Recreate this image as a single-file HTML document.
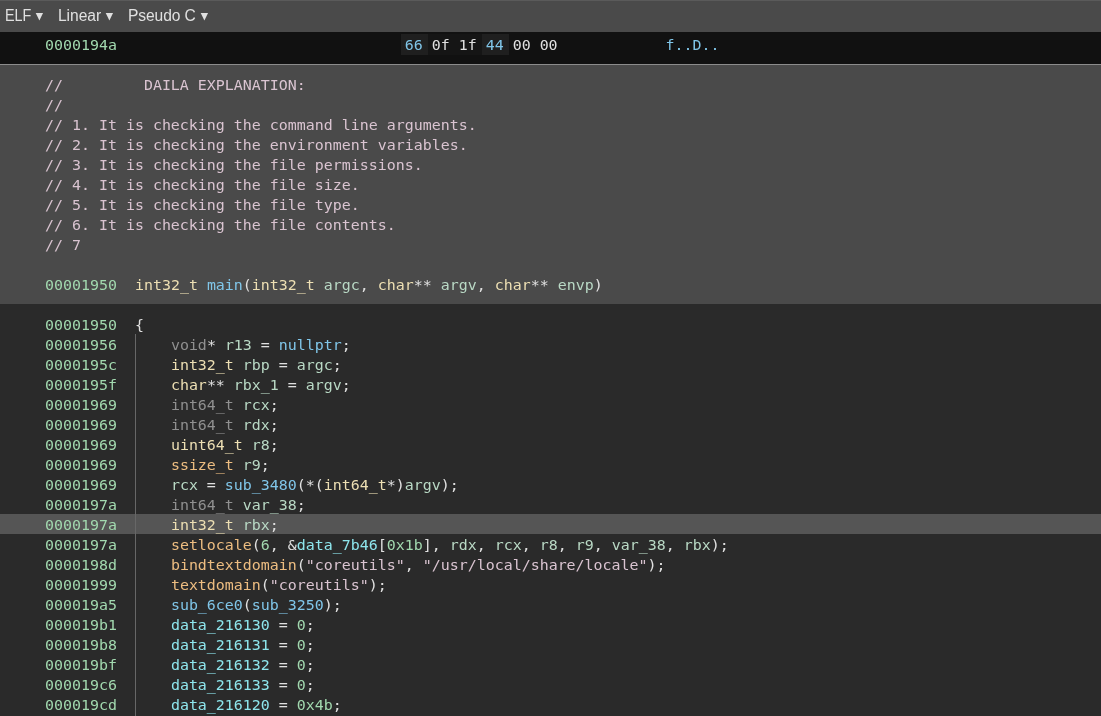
<!DOCTYPE html>
<html><head><meta charset="utf-8"><title>Linear view</title>
<style>
html,body{margin:0;padding:0;background:#2a2a2a;}
body{width:1101px;height:716px;position:relative;overflow:hidden;font-family:"DejaVu Sans Mono","Liberation Mono",monospace;font-size:14.95px;letter-spacing:0;color:#e0e0e0;}
.bg{position:absolute;left:0;width:1101px;}
.ln{position:absolute;left:0;height:20px;line-height:20px;white-space:pre;}
.ad{color:#a2d9af} .cm{color:#dac4d1} .ty{color:#eddfb3} .fn{color:#80c6e9} .im{color:#edbd81} .nu{color:#a2d9af} .st{color:#dac4d1} .gr{color:#909090} .da{color:#8ee6ed} .va{color:#b9d9c5}
.hb{color:#80c6e9;}
#txt{position:absolute;left:0;top:0;width:1101px;height:716px;will-change:transform;}
.ar{position:absolute;top:13px;width:0;height:0;border-left:3.7px solid transparent;border-right:3.7px solid transparent;border-top:7.6px solid #e0e0e0;}
.bx{position:absolute;top:34px;height:21px;width:27px}
.tb{position:absolute;top:0;height:31px;line-height:31px;font-family:"Liberation Sans",sans-serif;font-size:15px;color:#e0e0e0;white-space:pre;}
</style></head><body>
<div class="bg" style="top:0;height:32px;background:#4a4a4a;border-top:1px solid #5a5a5a;box-sizing:border-box"></div>
<div class="bg" style="top:32px;height:32px;background:#111"></div>
<div class="bg" style="top:64px;height:1px;background:#8c8c8c"></div>
<div class="bg" style="top:65px;height:239px;background:#4a4a4a"></div>
<div class="bg" style="top:514px;height:20px;background:#555"></div>
<div style="position:absolute;left:135px;top:334px;width:1px;height:382px;background:#676767"></div>
<div class="bx" style="left:401px;background:#1f1f1f"></div><div class="bx" style="left:428px;width:54px;background:#151515"></div><div class="bx" style="left:482px;background:#1f1f1f"></div>
<div id="txt">
<div class="tb" style="left:5px;top:0px;font-size:15.6px;letter-spacing:0;transform-origin:0 50%;transform: scaleX(0.92)">ELF</div><div class="tb" style="left:58px;top:0px;font-size:15.6px;letter-spacing:-0.05px;transform-origin:0 50%;transform: scaleX(1)">Linear</div><div class="tb" style="left:128px;top:0px;font-size:15.6px;letter-spacing:-0.1px;transform-origin:0 50%;transform: scaleX(1)">Pseudo C</div><svg style="position:absolute;left:0;top:0" width="260" height="32" viewBox="0 0 260 32"><polygon fill="#e0e0e0" points="35.7,12.9 43.05,12.9 39.4,20.5"/><polygon fill="#e0e0e0" points="105.7,12.9 113.05,12.9 109.4,20.5"/><polygon fill="#e0e0e0" points="200.7,12.9 208.05,12.9 204.4,20.5"/></svg>
<div class="ln" style="top:35px">     <span class="ad">0000194a</span>                                <span class="hb">66</span> 0f 1f <span class="hb">44</span> 00 00            <span class="fn">f..D..</span></div>
<div class="ln" style="top:75px">     <span class="cm">//         DAILA EXPLANATION:</span></div>
<div class="ln" style="top:95px">     <span class="cm">//</span></div>
<div class="ln" style="top:115px">     <span class="cm">// 1. It is checking the command line arguments.</span></div>
<div class="ln" style="top:135px">     <span class="cm">// 2. It is checking the environment variables.</span></div>
<div class="ln" style="top:155px">     <span class="cm">// 3. It is checking the file permissions.</span></div>
<div class="ln" style="top:175px">     <span class="cm">// 4. It is checking the file size.</span></div>
<div class="ln" style="top:195px">     <span class="cm">// 5. It is checking the file type.</span></div>
<div class="ln" style="top:215px">     <span class="cm">// 6. It is checking the file contents.</span></div>
<div class="ln" style="top:235px">     <span class="cm">// 7</span></div>
<div class="ln" style="top:275px">     <span class="ad">00001950</span>  <span class="ty">int32_t</span> <span class="fn">main</span>(<span class="ty">int32_t</span> <span class="va">argc</span>, <span class="ty">char</span>** <span class="va">argv</span>, <span class="ty">char</span>** <span class="va">envp</span>)</div>
<div class="ln" style="top:315px">     <span class="ad">00001950</span>  {</div>
<div class="ln" style="top:335px">     <span class="ad">00001956</span>      <span class="gr">void</span>* <span class="va">r13</span> = <span class="fn">nullptr</span>;</div>
<div class="ln" style="top:355px">     <span class="ad">0000195c</span>      <span class="ty">int32_t</span> <span class="va">rbp</span> = <span class="va">argc</span>;</div>
<div class="ln" style="top:375px">     <span class="ad">0000195f</span>      <span class="ty">char</span>** <span class="va">rbx_1</span> = <span class="va">argv</span>;</div>
<div class="ln" style="top:395px">     <span class="ad">00001969</span>      <span class="gr">int64_t</span> <span class="va">rcx</span>;</div>
<div class="ln" style="top:415px">     <span class="ad">00001969</span>      <span class="gr">int64_t</span> <span class="va">rdx</span>;</div>
<div class="ln" style="top:435px">     <span class="ad">00001969</span>      <span class="ty">uint64_t</span> <span class="va">r8</span>;</div>
<div class="ln" style="top:455px">     <span class="ad">00001969</span>      <span class="im">ssize_t</span> <span class="va">r9</span>;</div>
<div class="ln" style="top:475px">     <span class="ad">00001969</span>      <span class="va">rcx</span> = <span class="fn">sub_3480</span>(*(<span class="ty">int64_t</span>*)<span class="va">argv</span>);</div>
<div class="ln" style="top:495px">     <span class="ad">0000197a</span>      <span class="gr">int64_t</span> <span class="va">var_38</span>;</div>
<div class="ln" style="top:515px">     <span class="ad">0000197a</span>      <span class="ty">int32_t</span> <span class="va">rbx</span>;</div>
<div class="ln" style="top:535px">     <span class="ad">0000197a</span>      <span class="im">setlocale</span>(<span class="nu">6</span>, &<span class="da">data_7b46</span>[<span class="nu">0x1b</span>], <span class="va">rdx</span>, <span class="va">rcx</span>, <span class="va">r8</span>, <span class="va">r9</span>, <span class="va">var_38</span>, <span class="va">rbx</span>);</div>
<div class="ln" style="top:555px">     <span class="ad">0000198d</span>      <span class="im">bindtextdomain</span>(<span class="st">&quot;coreutils&quot;</span>, <span class="st">&quot;/usr/local/share/locale&quot;</span>);</div>
<div class="ln" style="top:575px">     <span class="ad">00001999</span>      <span class="im">textdomain</span>(<span class="st">&quot;coreutils&quot;</span>);</div>
<div class="ln" style="top:595px">     <span class="ad">000019a5</span>      <span class="fn">sub_6ce0</span>(<span class="fn">sub_3250</span>);</div>
<div class="ln" style="top:615px">     <span class="ad">000019b1</span>      <span class="da">data_216130</span> = <span class="nu">0</span>;</div>
<div class="ln" style="top:635px">     <span class="ad">000019b8</span>      <span class="da">data_216131</span> = <span class="nu">0</span>;</div>
<div class="ln" style="top:655px">     <span class="ad">000019bf</span>      <span class="da">data_216132</span> = <span class="nu">0</span>;</div>
<div class="ln" style="top:675px">     <span class="ad">000019c6</span>      <span class="da">data_216133</span> = <span class="nu">0</span>;</div>
<div class="ln" style="top:695px">     <span class="ad">000019cd</span>      <span class="da">data_216120</span> = <span class="nu">0x4b</span>;</div>
</div>
</body></html>
